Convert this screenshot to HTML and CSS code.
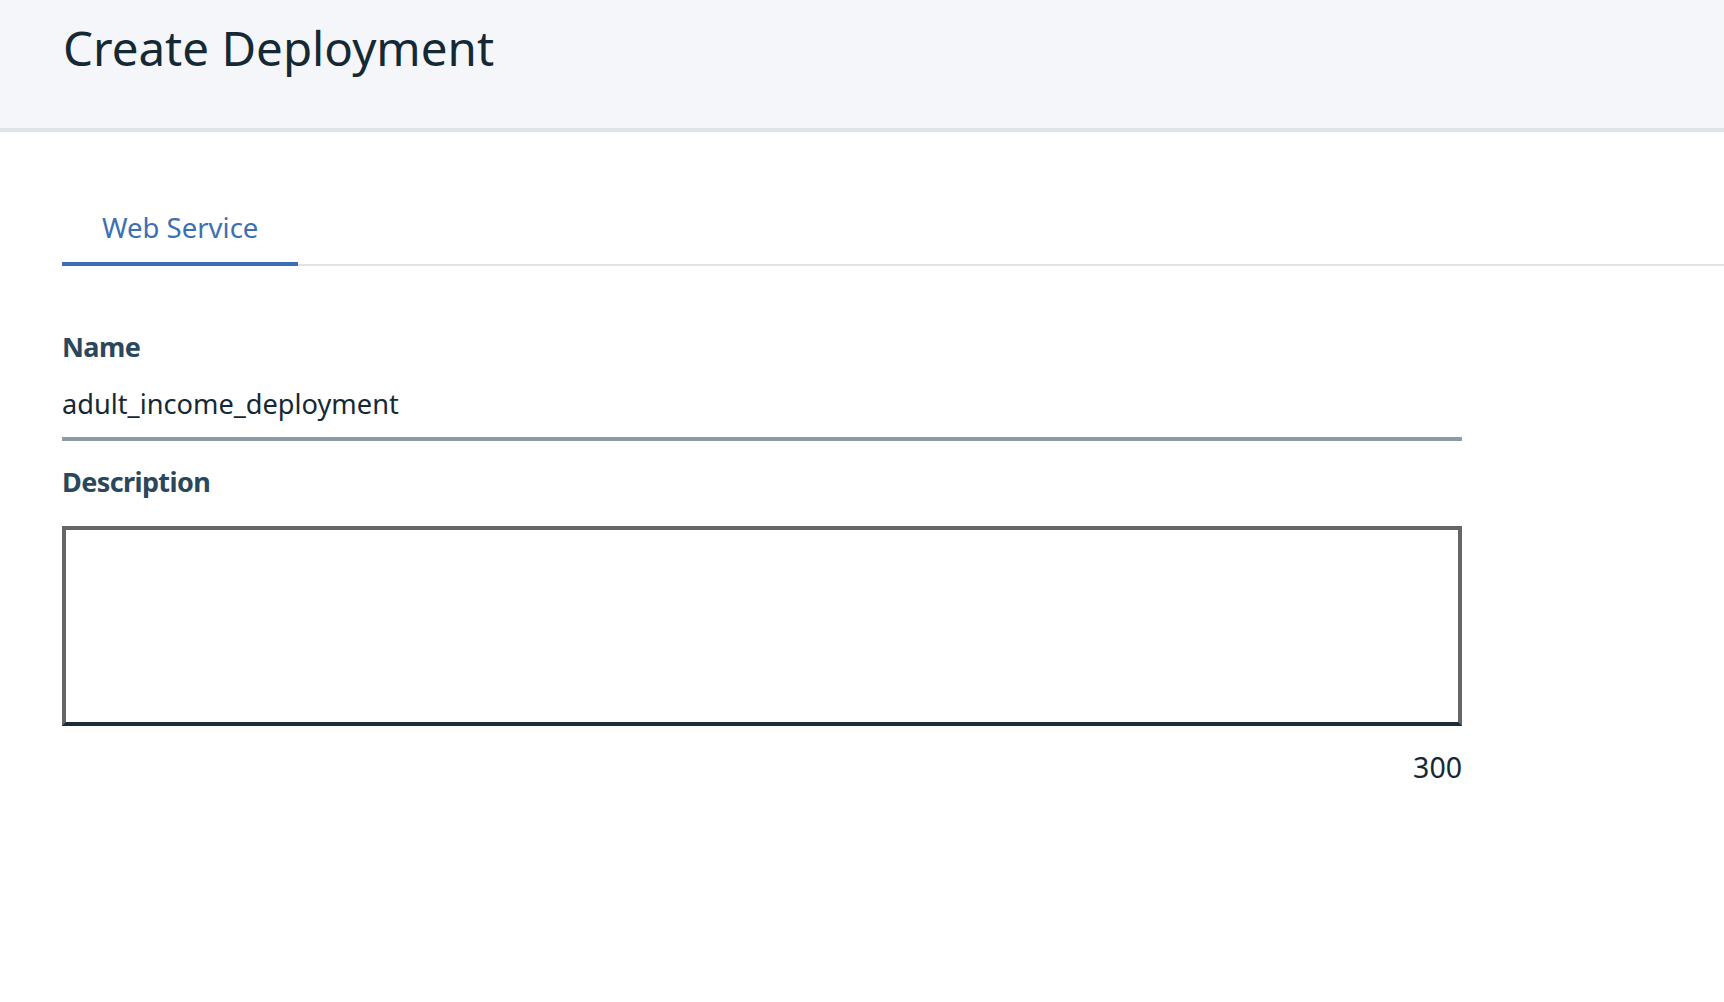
FILE: index.html
```html
<!DOCTYPE html>
<html lang="en">
<head>
<meta charset="utf-8">
<title>Create Deployment</title>
<link rel="stylesheet" href="styles.css">
</head>
<body>
<header class="page-header">
  <h1 class="page-title">Create Deployment</h1>
</header>
<main class="content">
  <nav class="tabs">
    <div class="tab tab--active">Web Service</div>
  </nav>
  <form class="form">
    <label class="field-label" for="name">Name</label>
    <input class="text-input" id="name" type="text" value="adult_income_deployment">
    <label class="field-label field-label--desc" for="desc">Description</label>
    <textarea class="text-area" id="desc"></textarea>
    <div class="counter">300</div>
  </form>
</main>
</body>
</html>
```
FILE: styles.css
```css
html, body {
  margin: 0;
  padding: 0;
  background: #ffffff;
  font-family: "Noto Sans", "Open Sans", sans-serif;
  color: #152935;
}

.page-header {
  height: 128px;
  background: #f4f6fa;
  border-bottom: 4px solid #dfe3e6;
  padding-left: 63px;
}

.page-title {
  margin: 0;
  padding-top: 24px;
  font-size: 47.5px;
  line-height: 48px;
  font-weight: 400;
  color: #152935;
}

.content {
  padding-left: 62px;
}

.tabs {
  margin-top: 75px;
  display: flex;
  border-bottom: 2px solid #dfe3e6;
}

.tab {
  padding: 1px 40px 14px;
  font-size: 27.5px;
  line-height: 40px;
  color: #3d70b2;
  margin-bottom: -2px;
}

.tab--active {
  border-bottom: 4px solid #3d70b2;
}

.form {
  width: 1400px;
  display: flex;
  flex-direction: column;
  padding-top: 63px;
}

.field-label {
  display: block;
  font-size: 27px;
  line-height: 36px;
  font-weight: 700;
  letter-spacing: -0.6px;
  color: #2b475c;
}

.text-input {
  display: block;
  box-sizing: border-box;
  width: 1400px;
  height: 56px;
  margin: 20px 0 0;
  padding: 0 0 16px 0;
  border: 0;
  border-bottom: 4px solid #8c9ba5;
  background: transparent;
  font-family: inherit;
  font-size: 27.2px;
  line-height: 36px;
  color: #152935;
  outline: none;
}

.field-label--desc {
  margin-top: 23px;
}

.text-area {
  display: block;
  box-sizing: border-box;
  width: 1400px;
  height: 200px;
  margin: 26px 0 0;
  padding: 10px;
  border: 4px solid #666666;
  border-bottom-color: #1b2b37;
  background: #ffffff;
  resize: none;
  font-family: inherit;
  font-size: 27px;
  outline: none;
}

.counter {
  margin-top: 23px;
  text-align: right;
  font-size: 28.5px;
  line-height: 36px;
  color: #152935;
}
```
